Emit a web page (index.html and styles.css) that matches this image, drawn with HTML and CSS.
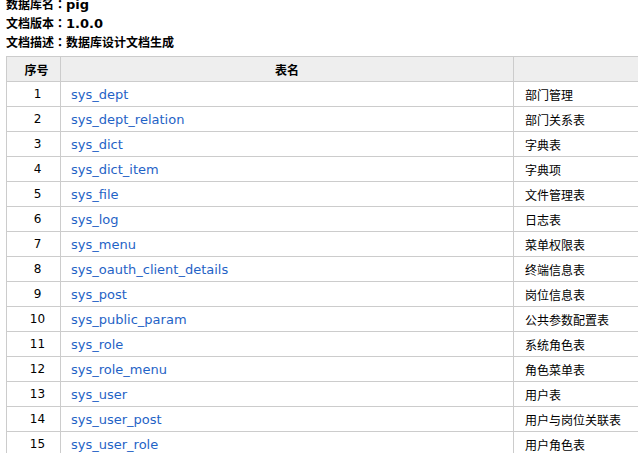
FILE: index.html
```html
<!DOCTYPE html>
<html>
<head>
<meta charset="utf-8">
<link rel="stylesheet" href="styles.css">
</head>
<body>
<div class="page">
  <div class="meta">
    <div class="meta-line"><span class="cn">数据库名<span class="colon">：</span></span>pig</div>
    <div class="meta-line"><span class="cn">文档版本<span class="colon">：</span></span>1.0.0</div>
    <div class="meta-line"><span class="cn">文档描述<span class="colon">：</span>数据库设计文档生成</span></div>
  </div>
  <table class="tables">
    <colgroup>
      <col class="c-no">
      <col class="c-name">
      <col class="c-desc">
    </colgroup>
    <thead>
      <tr><th class="no"><span class="cn">序号</span></th><th class="name"><span class="cn">表名</span></th><th class="desc"><span class="cn">说明</span></th></tr>
    </thead>
    <tbody>
      <tr><td class="no">1</td><td class="name"><a href="#">sys_dept</a></td><td class="desc cn">部门管理</td></tr>
      <tr><td class="no">2</td><td class="name"><a href="#">sys_dept_relation</a></td><td class="desc cn">部门关系表</td></tr>
      <tr><td class="no">3</td><td class="name"><a href="#">sys_dict</a></td><td class="desc cn">字典表</td></tr>
      <tr><td class="no">4</td><td class="name"><a href="#">sys_dict_item</a></td><td class="desc cn">字典项</td></tr>
      <tr><td class="no">5</td><td class="name"><a href="#">sys_file</a></td><td class="desc cn">文件管理表</td></tr>
      <tr><td class="no">6</td><td class="name"><a href="#">sys_log</a></td><td class="desc cn">日志表</td></tr>
      <tr><td class="no">7</td><td class="name"><a href="#">sys_menu</a></td><td class="desc cn">菜单权限表</td></tr>
      <tr><td class="no">8</td><td class="name"><a href="#">sys_oauth_client_details</a></td><td class="desc cn">终端信息表</td></tr>
      <tr><td class="no">9</td><td class="name"><a href="#">sys_post</a></td><td class="desc cn">岗位信息表</td></tr>
      <tr><td class="no">10</td><td class="name"><a href="#">sys_public_param</a></td><td class="desc cn">公共参数配置表</td></tr>
      <tr><td class="no">11</td><td class="name"><a href="#">sys_role</a></td><td class="desc cn">系统角色表</td></tr>
      <tr><td class="no">12</td><td class="name"><a href="#">sys_role_menu</a></td><td class="desc cn">角色菜单表</td></tr>
      <tr><td class="no">13</td><td class="name"><a href="#">sys_user</a></td><td class="desc cn">用户表</td></tr>
      <tr><td class="no">14</td><td class="name"><a href="#">sys_user_post</a></td><td class="desc cn">用户与岗位关联表</td></tr>
      <tr><td class="no">15</td><td class="name"><a href="#">sys_user_role</a></td><td class="desc cn">用户角色表</td></tr>
    </tbody>
  </table>
</div>
</body>
</html>
```
FILE: styles.css
```css
html, body {
  margin: 0;
  padding: 0;
  overflow: hidden;
  background: #ffffff;
}
body {
  font-family: "DejaVu Sans", "Noto Sans CJK SC", sans-serif;
  font-size: 13px;
  color: #000;
}
.page {
  margin: -6px 0 0 6px;
  width: 900px;
}
.cn {
  font-family: "Noto Sans CJK SC", "DejaVu Sans", sans-serif;
  font-size: 12px;
}
.colon {
  font-family: "Noto Sans CJK TC", "Noto Sans CJK SC", sans-serif;
}
.meta-line {
  font-weight: bold;
  height: 19px;
  line-height: 19px;
  white-space: nowrap;
}
.tables {
  margin-top: 5px;
  border-collapse: collapse;
  table-layout: fixed;
  width: 800px;
}
.c-no { width: 54px; }
.c-name { width: 453px; }
.c-desc { width: 293px; }
.tables th,
.tables td {
  border: 1px solid #cccccc;
  height: 25px;
  padding: 0;
  box-sizing: border-box;
  white-space: nowrap;
}
.tables th {
  background: #eeeeee;
  font-weight: bold;
  text-align: center;
}
.tables td.no {
  text-align: center;
  padding-left: 8px;
  font-size: 12px;
}
.tables th.no {
  padding-left: 6px;
}
.tables td.name {
  padding-left: 10px;
}
.tables td.desc {
  padding-left: 11px;
}
.tables a {
  color: #1f63c6;
  text-decoration: none;
}
```
